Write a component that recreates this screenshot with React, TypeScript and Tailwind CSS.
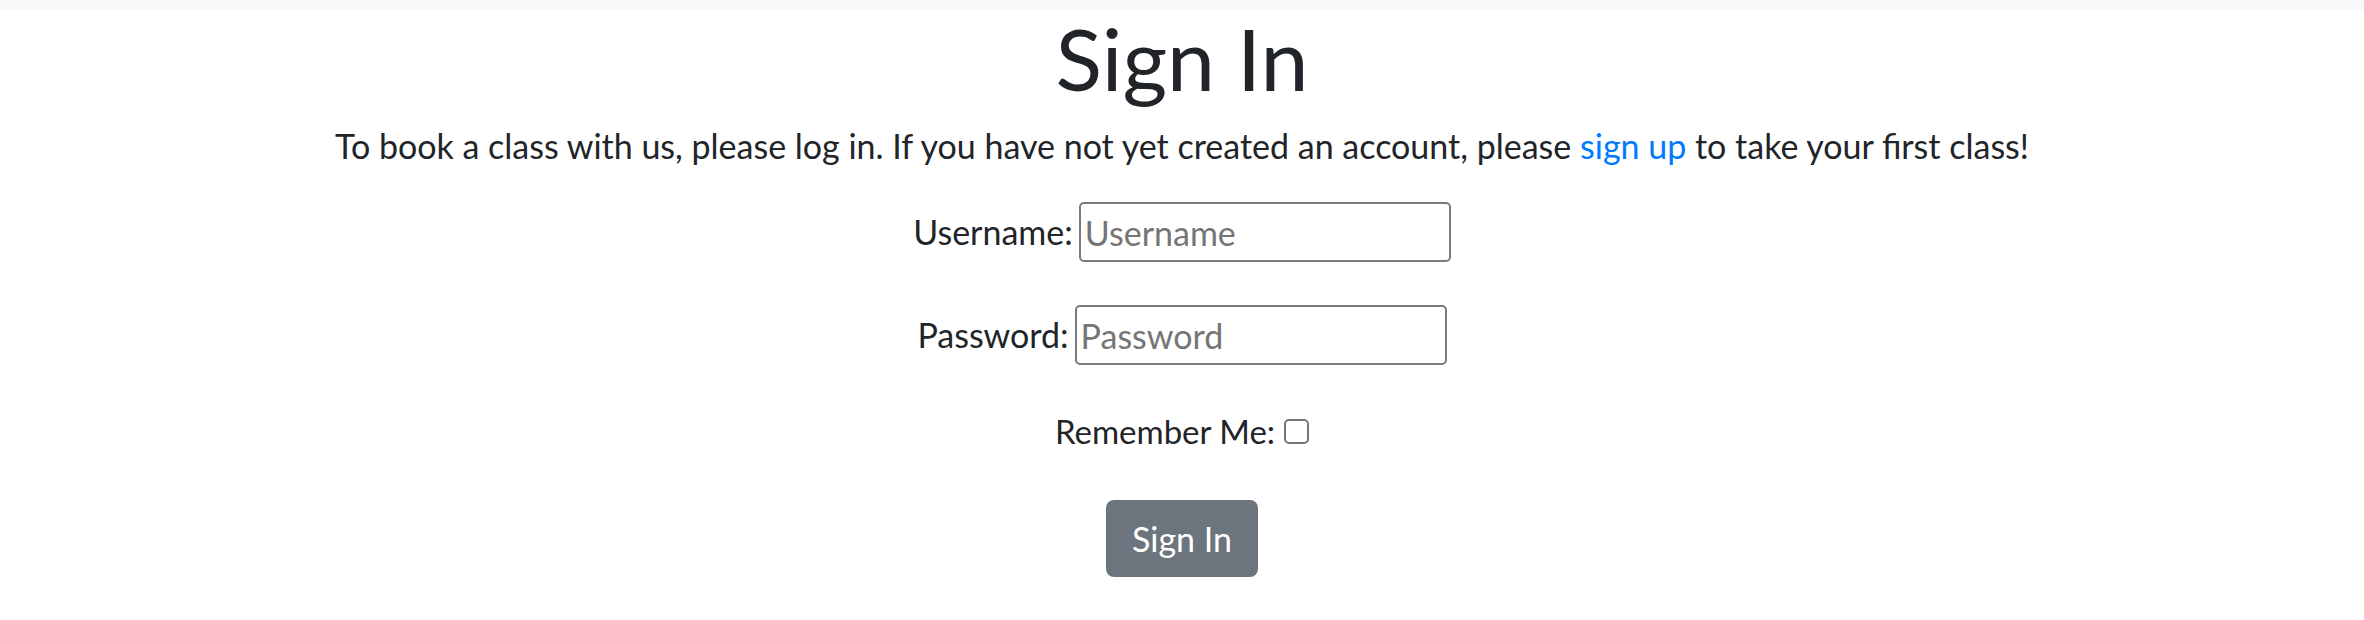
import { useState } from "react";

export default function App() {
    // States
    const [username, setUsername] = useState("");
    const [password, setPassword] = useState("");
    const [remember, setRemember] = useState(false);

    return (
        <div className="min-h-screen bg-white text-[#212529] font-['Lato',sans-serif]">
            {/* Navbar strip */}
            <div className="h-[10px] bg-[#f8f9fa]" />

            <main className="flex flex-col items-center">
                <h1 className="text-[86px] leading-[96px] font-normal text-center">Sign In</h1>
                <p className="mt-[16px] text-[34px] leading-[48px] text-center">
                    To book a class with us, please log in. If you have not yet created an account, please{" "}
                    <a href="#" className="text-[#007bff]">sign up</a> to take your first class!
                </p>

                <form className="flex flex-col items-center" onSubmit={(e) => e.preventDefault()}>
                    <div className="mt-[32px] flex items-center gap-[6px]">
                        <label htmlFor="id_login" className="text-[34px] leading-[48px]">Username:</label>
                        <input
                            id="id_login"
                            type="text"
                            value={username}
                            onChange={(e) => setUsername(e.target.value)}
                            placeholder="Username"
                            className="w-[372px] h-[60px] px-[4px] text-[34px] border-2 border-[#7a7a7a] rounded-[5px] placeholder-[#757575] outline-none"
                        />
                    </div>
                    <div className="mt-[43px] flex items-center gap-[6px]">
                        <label htmlFor="id_password" className="text-[34px] leading-[48px]">Password:</label>
                        <input
                            id="id_password"
                            type="password"
                            value={password}
                            onChange={(e) => setPassword(e.target.value)}
                            placeholder="Password"
                            className="w-[372px] h-[60px] px-[4px] text-[34px] border-2 border-[#7a7a7a] rounded-[5px] placeholder-[#757575] outline-none"
                        />
                    </div>
                    <div className="mt-[42px] flex items-center gap-[9px]">
                        <label htmlFor="id_remember" className="text-[33px] leading-[48px]">Remember Me:</label>
                        <input
                            id="id_remember"
                            type="checkbox"
                            checked={remember}
                            onChange={() => setRemember(!remember)}
                            className="appearance-none shrink-0 w-[25px] h-[25px] border-2 border-[#767676] rounded-[5px] bg-white"
                        />
                    </div>
                    <button
                        type="submit"
                        className="mt-[45px] w-[152px] h-[77px] rounded-[8px] bg-[#6c757d] text-white text-[34px] leading-[48px]"
                    >
                        Sign In
                    </button>
                </form>
            </main>
        </div>
    );
}
